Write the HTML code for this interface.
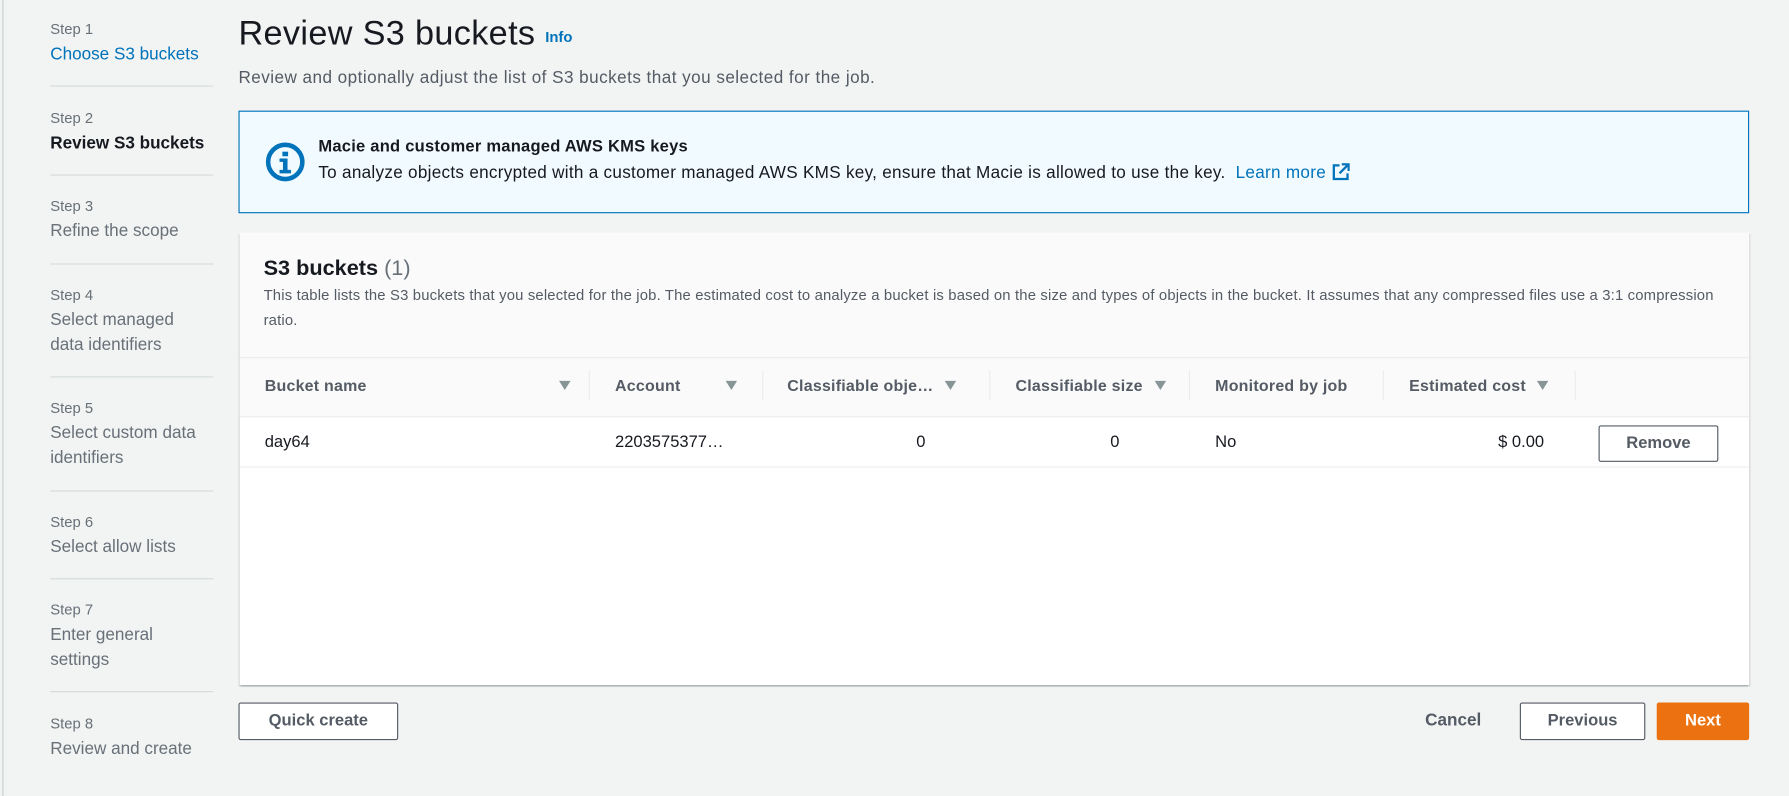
<!DOCTYPE html>
<html><head><meta charset="utf-8"><style>
*{box-sizing:border-box;margin:0;padding:0}
html,body{width:1789px;height:796px;overflow:hidden;background:#f2f3f3}
#w{position:absolute;left:0;top:0;width:1568px;height:698px;transform:scale(1.141,1.1404);transform-origin:0 0;font-family:"Liberation Sans",sans-serif;color:#16191f}
.a{position:absolute;white-space:nowrap}
.sl{font-size:13px;color:#687078}
.st{font-size:15px;color:#687078;line-height:22px}
.sep{position:absolute;left:44px;width:143px;height:1px;background:#d5dbdb}
.th{position:absolute;top:330px;font-size:14px;font-weight:bold;color:#545b64;letter-spacing:.2px}
.dv{position:absolute;top:325px;width:1px;height:26px;background:#eaeded}
.tri{display:inline-block;width:0;height:0;border-left:5px solid transparent;border-right:5px solid transparent;border-top:8px solid #879596;margin-left:6px;vertical-align:1px}
.td{position:absolute;top:380px;font-size:14.5px}
.btn{position:absolute;border:1px solid #545b64;background:#fff;border-radius:2px;font-size:14.5px;font-weight:bold;color:#545b64;text-align:center}
</style></head><body><div id="w">
<div style="position:absolute;left:0;top:0;width:3px;height:698px;border-right:1px solid #c9cfd0"></div>
<div class="a sl" style="left:44px;top:18px">Step 1</div>
<div class="a st" style="left:44px;top:37px;color:#0073bb">Choose S3 buckets</div>
<div class="sep" style="top:75px"></div>
<div class="a sl" style="left:44px;top:96px">Step 2</div>
<div class="a st" style="left:44px;top:115px;color:#16191f;font-weight:bold">Review S3 buckets</div>
<div class="sep" style="top:153px"></div>
<div class="a sl" style="left:44px;top:173px">Step 3</div>
<div class="a st" style="left:44px;top:192px">Refine the scope</div>
<div class="sep" style="top:231px"></div>
<div class="a sl" style="left:44px;top:251px">Step 4</div>
<div class="a st" style="left:44px;top:270px">Select managed<br>data identifiers</div>
<div class="sep" style="top:330px"></div>
<div class="a sl" style="left:44px;top:350px">Step 5</div>
<div class="a st" style="left:44px;top:369px">Select custom data<br>identifiers</div>
<div class="sep" style="top:430px"></div>
<div class="a sl" style="left:44px;top:450px">Step 6</div>
<div class="a st" style="left:44px;top:469px">Select allow lists</div>
<div class="sep" style="top:507px"></div>
<div class="a sl" style="left:44px;top:527px">Step 7</div>
<div class="a st" style="left:44px;top:546px">Enter general<br>settings</div>
<div class="sep" style="top:606px"></div>
<div class="a sl" style="left:44px;top:627px">Step 8</div>
<div class="a st" style="left:44px;top:646px">Review and create</div>

<div class="a" style="left:209px;top:13px;font-size:30px;letter-spacing:.3px">Review S3 buckets <span style="font-size:13px;font-weight:bold;color:#0073bb;vertical-align:2px;letter-spacing:0">Info</span></div>
<div class="a" style="left:209px;top:60px;font-size:15px;letter-spacing:.4px;color:#545b64">Review and optionally adjust the list of S3 buckets that you selected for the job.</div>

<div style="position:absolute;left:209px;top:97px;width:1324px;height:90px;background:#f1faff;border:1px solid #0073bb"></div>
<svg style="position:absolute;left:232px;top:124px" width="36" height="36" viewBox="0 0 36 36"><circle cx="18" cy="18" r="15" fill="none" stroke="#0073bb" stroke-width="4"/><rect x="15.5" y="9" width="5" height="4" fill="#0073bb"/><path d="M13 15h7v10h3v3H13v-3h3v-7h-3z" fill="#0073bb"/></svg>
<div class="a" style="left:279px;top:121px;font-size:14.5px;font-weight:bold;letter-spacing:.2px">Macie and customer managed AWS KMS keys</div>
<div class="a" style="left:279px;top:143px;font-size:15px;letter-spacing:.25px">To analyze objects encrypted with a customer managed AWS KMS key, ensure that Macie is allowed to use the key. &nbsp;<span style="color:#0073bb">Learn more</span> <svg width="16" height="16" viewBox="0 0 16 16" style="vertical-align:-3px"><path d="M7 2H2v12h12V9" fill="none" stroke="#0073bb" stroke-width="2"/><path d="M9 1h6v6M15 1L7 9" fill="none" stroke="#0073bb" stroke-width="2"/></svg></div>

<div style="position:absolute;left:210px;top:204px;width:1323px;height:397px;background:#fff;box-shadow:0 1px 1px rgba(0,28,36,.3),1px 1px 1px rgba(0,28,36,.15),-1px 1px 1px rgba(0,28,36,.15)"></div>
<div style="position:absolute;left:210px;top:204px;width:1323px;height:162px;background:#fafafa;border-bottom:1px solid #eaeded"></div>
<div style="position:absolute;left:210px;top:313px;width:1323px;height:1px;background:#eaeded"></div>
<div class="a" style="left:231px;top:225px;font-size:19px;font-weight:bold">S3 buckets <span style="font-weight:normal;color:#687078">(1)</span></div>
<div class="a" style="left:231px;top:248px;font-size:13px;letter-spacing:.15px;color:#545b64;line-height:22px;white-space:normal;width:1285px">This table lists the S3 buckets that you selected for the job. The estimated cost to analyze a bucket is based on the size and types of objects in the bucket. It assumes that any compressed files use a 3:1 compression ratio.</div>
<div class="th" style="left:232px">Bucket name</div><div class="th" style="left:484px"><span class="tri"></span></div>
<div class="dv" style="left:516px"></div>
<div class="th" style="left:539px">Account</div><div class="th" style="left:630px"><span class="tri"></span></div>
<div class="dv" style="left:668px"></div>
<div class="th" style="left:690px">Classifiable obje… <span class="tri"></span></div>
<div class="dv" style="left:867px"></div>
<div class="th" style="left:890px">Classifiable size <span class="tri"></span></div>
<div class="dv" style="left:1042px"></div>
<div class="th" style="left:1065px">Monitored by job</div>
<div class="dv" style="left:1212px"></div>
<div class="th" style="left:1235px">Estimated cost <span class="tri"></span></div>
<div class="dv" style="left:1380px"></div>
<div style="position:absolute;left:210px;top:409px;width:1323px;height:1px;background:#eaeded"></div>
<div class="td" style="left:232px">day64</div>
<div class="td" style="left:539px">2203575377…</div>
<div class="td" style="left:803px">0</div>
<div class="td" style="left:973px">0</div>
<div class="td" style="left:1065px">No</div>
<div class="td" style="left:1313px">$ 0.00</div>
<div class="btn" style="left:1401px;top:373px;width:105px;height:32px;line-height:30px">Remove</div>

<div class="btn" style="left:209px;top:616px;width:140px;height:33px;line-height:31px">Quick create</div>
<div class="a" style="left:1249px;top:623px;font-size:15px;font-weight:bold;color:#545b64">Cancel</div>
<div class="btn" style="left:1332px;top:616px;width:110px;height:33px;line-height:31px">Previous</div>
<div class="btn" style="left:1452px;top:616px;width:81px;height:33px;line-height:31px;background:#ec7211;border-color:#ec7211;color:#fff">Next</div>
</div></body></html>
